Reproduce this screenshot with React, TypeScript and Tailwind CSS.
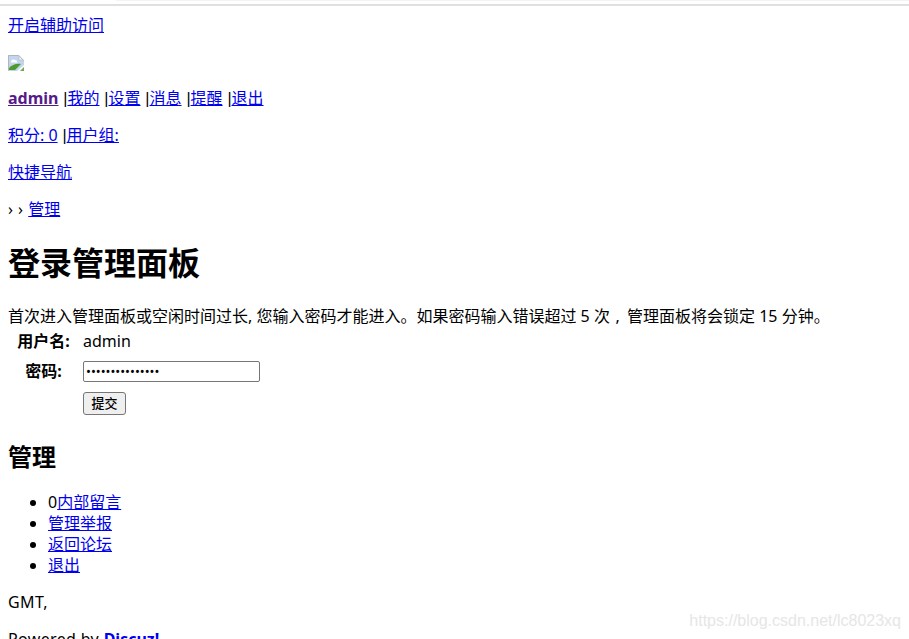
const link = "text-[#0000ee] underline";

const BrokenImage = () => (
  <svg width="16" height="16" viewBox="0 0 16 16" className="block">
    <path d="M0 0H11L16 5V16H0Z" fill="#c3d4ee" />
    <path d="M0.5 15.5V0.5H10.5L15.5 5.5" fill="none" stroke="#b5b5b5" />
    <path d="M11 1V5H15Z" fill="#f2f2f2" stroke="#b5b5b5" strokeWidth="0.6" />
    <path d="M3 7C3 5 5 4 6.5 5C8 4.5 9.5 6 9.5 7.5H3Z" fill="#fff" />
    <path d="M1 15V13C4 10 8 8 13 9L7 15Z" fill="#4f9a2f" />
    <path d="M9 16L16 10V12L12 16Z" fill="#fff" />
    <path d="M12 16L16 12V16Z" fill="#6fae4a" />
  </svg>
);

const Sep = ({ children }: { children: string }) => (
  <>
    <span className="inline-block w-[9px] text-right font-['Liberation_Sans',sans-serif]">|</span>
    <a className={link}>{children}</a>
  </>
);

export default function App() {
  return (
    <div className="relative h-[639px] overflow-hidden bg-white text-black text-[16px] leading-[21px] font-['Noto_Sans','Noto_Sans_CJK_SC',sans-serif]">
      <div className="h-[6px] border-b-2 border-[#e0e0e0]">
        <div className="ml-[116px] h-px bg-[#f4f4f4]" />
      </div>
      <div className="px-2">
        <p className="mt-[9px]"><a className={link}>开启辅助访问</a></p>
        <p className="mt-4 h-[20px] pt-[3px]"><BrokenImage /></p>
        <p className="mt-4">
          <a className="text-[#551a8b] underline font-bold">admin</a>
          <Sep>我的</Sep>
          <Sep>设置</Sep>
          <Sep>消息</Sep>
          <Sep>提醒</Sep>
          <Sep>退出</Sep>
        </p>
        <p className="mt-4">
          <a className={link}>积分: 0</a>
          <Sep>用户组:</Sep>
        </p>
        <p className="mt-4"><a className={link}>快捷导航</a></p>
        <p className="mt-4"><span className="tracking-[0.5px]">› › </span><a className={link}>管理</a></p>

        <h1 className="mt-[21px] text-[32px] leading-[43px] font-bold">登录管理面板</h1>

        <p className="mt-[22px]">首次进入管理面板或空闲时间过长, 您输入密码才能进入。如果密码输入错误超过 5 次<span className="tracking-[1.5px]"> , </span>管理面板将会锁定 15 分钟。</p>

        <div className="grid grid-cols-[71px_auto] justify-start gap-y-[9px] pt-[4px] items-center">
          <div className="font-bold text-center">用户名:</div>
          <div className="pl-[4px]">admin</div>
          <div className="font-bold text-center">密码:</div>
          <div className="pl-[4px]">
            <input
              type="password"
              defaultValue="admin1234567890"
              className="block w-[177px] h-[21px] bg-white border border-[#767676] rounded-[2px] px-[2px] text-[13px] outline-none"
            />
          </div>
          <div />
          <div className="pl-[4px] pt-[1px]">
            <button className="block w-[43px] h-[23px] bg-[#efefef] border border-[#767676] rounded-[3px] text-[13px] leading-none font-medium">提交</button>
          </div>
        </div>

        <h2 className="mt-[26px] text-[24px] leading-[32px] font-bold">管理</h2>

        <ul className="mt-[19px] pl-10 list-disc">
          <li>0<a className={link}>内部留言</a></li>
          <li><a className={link}>管理举报</a></li>
          <li><a className={link}>返回论坛</a></li>
          <li><a className={link}>退出</a></li>
        </ul>

        <p className="mt-4 tracking-[0.4px]">GMT,</p>
        <p className="mt-4"><span className="tracking-[0.35px]">Powered by </span><a className="text-[#0000ee] font-bold">Discuz!</a></p>
      </div>
      <div className="absolute right-[8px] top-[612px] text-[16px] leading-[18px] text-[#e6e6e6] font-['Liberation_Sans',sans-serif]">https://blog.csdn.net/lc8023xq</div>
    </div>
  );
}
